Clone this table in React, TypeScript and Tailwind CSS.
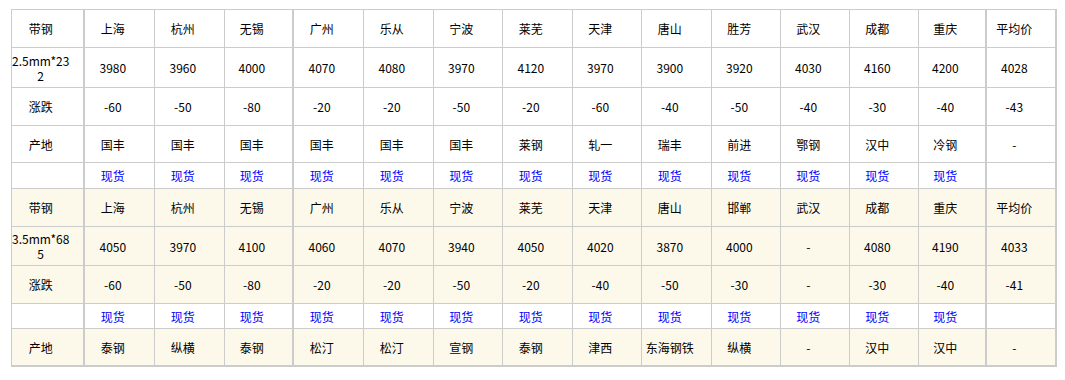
import React from "react";

const colClasses = [
  "w-[71px]", "w-[70px]", "w-[70px]", "w-[69px]", "w-[70px]", "w-[70px]", "w-[69px]", "w-[70px]",
  "w-[69px]", "w-[70px]", "w-[69px]", "w-[69px]", "w-[69px]", "w-[68px]", "w-[70px]",
];
const thick = new Set([0, 3, 13, 14]);

type Row = {
  cells: (string | React.ReactNode)[];
  h: string;
  cream?: boolean;
  blue?: boolean;
  last?: boolean;
};

const cities1 = ["带钢", "上海", "杭州", "无锡", "广州", "乐从", "宁波", "莱芜", "天津", "唐山", "胜芳", "武汉", "成都", "重庆", "平均价"];
const cities2 = ["带钢", "上海", "杭州", "无锡", "广州", "乐从", "宁波", "莱芜", "天津", "唐山", "邯郸", "武汉", "成都", "重庆", "平均价"];
const spot = ["", ...Array(13).fill("现货"), ""];

const rows: Row[] = [
  { cells: cities1, h: "h-[38px]" },
  {
    cells: [
      <span key="s">2.5mm*23<br />2</span>,
      "3980", "3960", "4000", "4070", "4080", "3970", "4120", "3970", "3900", "3920", "4030", "4160", "4200", "4028",
    ],
    h: "h-[40px]",
  },
  { cells: ["涨跌", "-60", "-50", "-80", "-20", "-20", "-50", "-20", "-60", "-40", "-50", "-40", "-30", "-40", "-43"], h: "h-[38px]" },
  { cells: ["产地", "国丰", "国丰", "国丰", "国丰", "国丰", "国丰", "莱钢", "轧一", "瑞丰", "前进", "鄂钢", "汉中", "冷钢", "-"], h: "h-[37px]" },
  { cells: spot, h: "h-[26px]", blue: true },
  { cells: cities2, h: "h-[38px]", cream: true },
  {
    cells: [
      <span key="s">3.5mm*68<br />5</span>,
      "4050", "3970", "4100", "4060", "4070", "3940", "4050", "4020", "3870", "4000", "-", "4080", "4190", "4033",
    ],
    h: "h-[39px]",
    cream: true,
  },
  { cells: ["涨跌", "-60", "-50", "-80", "-20", "-20", "-50", "-20", "-40", "-50", "-30", "-", "-30", "-40", "-41"], h: "h-[38px]", cream: true },
  { cells: spot, h: "h-[25px]", blue: true },
  { cells: ["产地", "泰钢", "纵横", "泰钢", "松汀", "松汀", "宣钢", "泰钢", "津西", "东海钢铁", "纵横", "-", "汉中", "汉中", "-"], h: "h-[38px]", cream: true, last: true },
];

export default function App() {
  return (
    <div className="w-[1065px] h-[380px] bg-white pl-[11px] pt-[9px] font-['Noto_Sans_CJK_SC','DejaVu_Sans',sans-serif]">
      <table className="table-fixed border-separate border-spacing-0 border-l border-t border-[#cccccc] text-[12px] leading-[15px] text-black">
        <colgroup>
          {colClasses.map((w, i) => (
            <col key={i} className={w} />
          ))}
        </colgroup>
        <tbody>
          {rows.map((r, ri) => (
            <tr key={ri} className={`${r.h} ${r.cream ? "bg-[#fcf9eb]" : "bg-white"}`}>
              {r.cells.map((c, ci) => (
                <td
                  key={ci}
                  className={[
                    "border-[#cccccc] text-center align-middle p-0 pr-[14px]",
                    thick.has(ci) ? "border-r-2" : "border-r",
                    r.last ? "border-b-2" : "border-b",
                    r.blue ? "text-[#0000ff]" : "",
                  ].join(" ")}
                >
                  {c}
                </td>
              ))}
            </tr>
          ))}
        </tbody>
      </table>
    </div>
  );
}
